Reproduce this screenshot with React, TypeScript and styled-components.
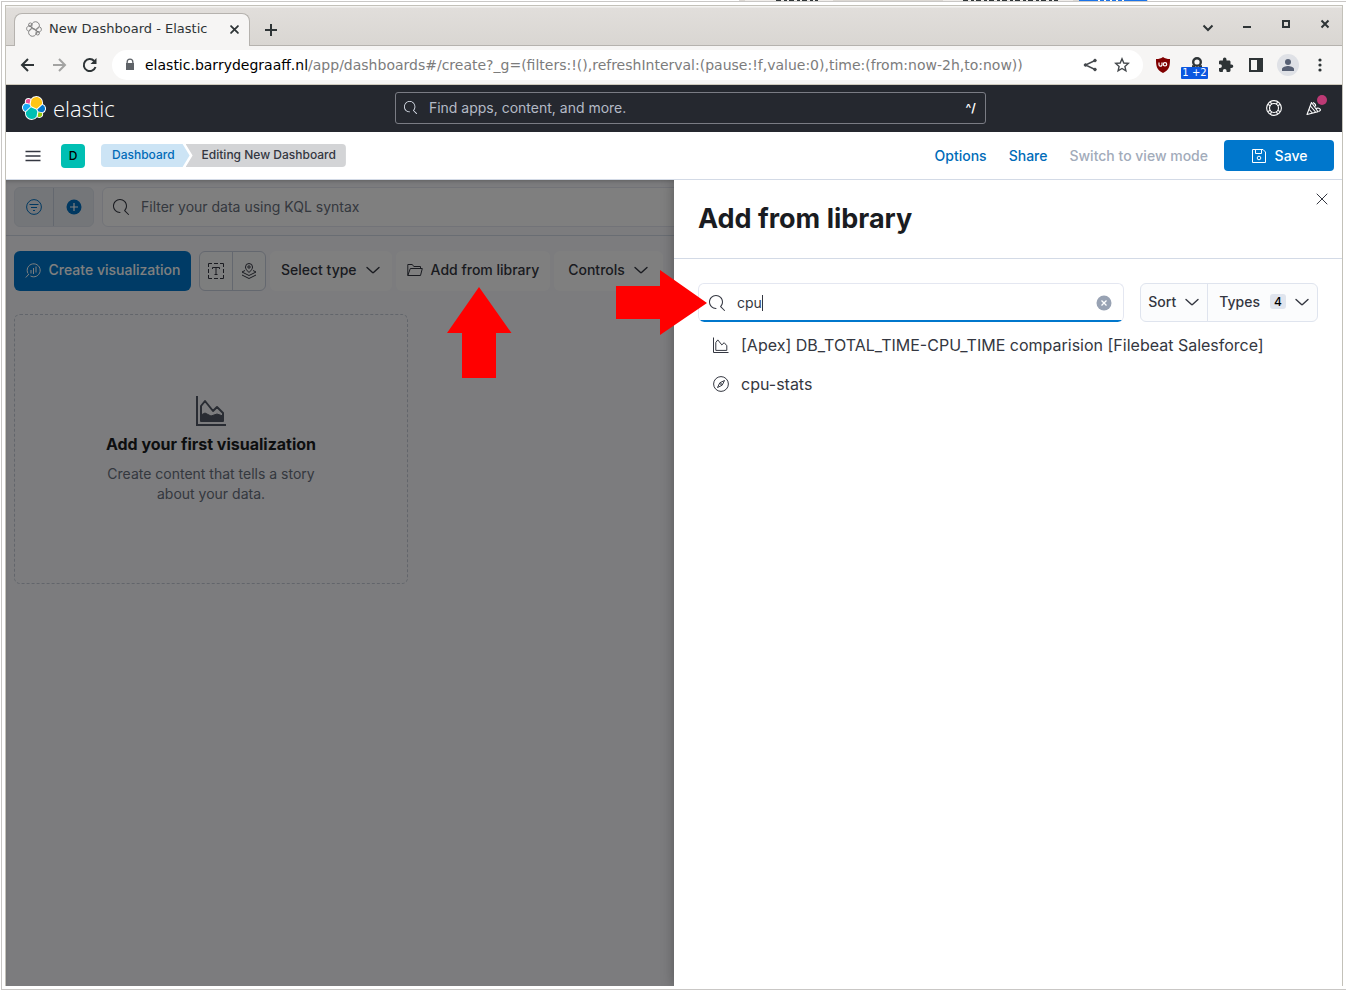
import React from "react";
import styled, { createGlobalStyle, css } from "styled-components";

const Global = createGlobalStyle`
  *, *::before, *::after { box-sizing: border-box; }
  html, body, #root { height: 100%; }
  body { margin: 0; background: #fff; overflow: hidden; font-family: Inter, "Liberation Sans", sans-serif; font-size: 14px; line-height: 20px; color: #343741; }
  button, input { font: inherit; color: inherit; }
  button { border: 0; padding: 0; background: none; cursor: pointer; }
  a { text-decoration: none; color: inherit; }
  h1, h2, p, ul { margin: 0; padding: 0; }
  svg { display: block; flex: none; }
`;

/* ---------- desktop behind the browser ---------- */

const Desktop = styled.div`
  display: flex;
  flex-direction: column;
  height: 100vh;
`;

const DialogEdge = styled.div`
  display: flex;
  justify-content: flex-end;
  flex: none;
  height: 1px;
  padding-right: 176px;
`;

const Frame = styled.div`
  flex: 1;
  min-height: 0;
  margin-left: 1px;
  padding: 3px;
  border: 1px solid #c9c7c5;
  border-right: 0;
  display: flex;
`;

const BrowserWindow = styled.div`
  flex: 1;
  min-width: 0;
  display: flex;
  flex-direction: column;
  border: 1px solid #c3c1b9;
  border-bottom: 0;
  background: #fff;
`;

/* ---------- browser chrome ---------- */

const TabBar = styled.div`
  display: flex;
  align-items: flex-end;
  height: 40px;
  flex: none;
  padding-left: 8px;
  background: linear-gradient(#f4f3f1 0, #f4f3f1 1px, #e1dedb 2px, #d9d6d2 100%);
  box-shadow: inset 0 -1px #b5b2ae;
  font-family: "DejaVu Sans", sans-serif;
  font-size: 13px;
  color: #2e3436;
`;

const Tab = styled.div`
  display: flex;
  align-items: center;
  width: 236px;
  height: 33px;
  padding: 0 7px 2px 11px;
  border: 1px solid #b5b2ae;
  border-bottom: 0;
  border-radius: 8px 8px 0 0;
  background: #f6f5f4;
`;

const TabTitle = styled.span`
  flex: 1;
  margin-left: 7px;
  white-space: nowrap;
`;

const PlainButton = styled.button<{ $size?: number }>`
  display: flex;
  align-items: center;
  justify-content: center;
  flex: none;
  width: ${(p) => p.$size ?? 16}px;
  height: ${(p) => p.$size ?? 16}px;
`;

const NewTab = styled(PlainButton)`
  margin: 0 0 8px 13px;
`;

const WindowControls = styled.div`
  display: flex;
  align-items: center;
  align-self: flex-start;
  gap: 23px;
  height: 36px;
  margin-left: auto;
  padding-right: 9px;
`;

const AddressBar = styled.div`
  display: flex;
  align-items: center;
  gap: 12px;
  height: 39px;
  flex: none;
  padding: 0 13px 0 12px;
  background: #f6f5f4;
  border-bottom: 1px solid #cfcabd;
  color: #2e3436;
`;

const NavButtons = styled.div`
  display: flex;
  gap: 11px;
`;

const UrlField = styled.div`
  display: flex;
  align-items: center;
  flex: 1;
  min-width: 0;
  height: 30px;
  padding: 0 12px;
  border-radius: 15px;
  background: #fff;
  font: 14px/20px "DejaVu Sans", sans-serif;
  color: #7c7c7c;
  white-space: nowrap;
`;

const Url = styled.span`
  flex: 1;
  margin-left: 9px;
  overflow: hidden;
  b { font-weight: 400; color: #000; }
`;

const UrlTools = styled.div`
  display: flex;
  gap: 14px;
`;

const Extensions = styled.div`
  display: flex;
  align-items: center;
  gap: 12px;
`;

const BadgeHost = styled.span<{ $width?: number }>`
  position: relative;
  display: flex;
  justify-content: flex-end;
  width: ${(p) => p.$width ?? 16}px;
`;

const ExtBadge = styled.span`
  position: absolute;
  top: 10px;
  left: -2px;
  width: 27px;
  height: 12px;
  border-radius: 1px;
  background: #0b57e0;
  color: #fff;
  font: 10px/12px "DejaVu Sans", sans-serif;
  text-align: center;
  white-space: nowrap;
`;

const Avatar = styled.span`
  display: flex;
  align-items: center;
  justify-content: center;
  width: 22px;
  height: 22px;
  border-radius: 50%;
  background: #dfe1e6;
`;

/* ---------- elastic header ---------- */

const TopHeader = styled.header`
  display: flex;
  justify-content: space-between;
  align-items: center;
  height: 47px;
  flex: none;
  padding: 0 20px 2px 16px;
  background: #25282f;
  color: #fff;
`;

const Brand = styled.a`
  display: flex;
  align-items: center;
  gap: 7px;
  font: 300 22px/28px "Open Sans", "Noto Sans", sans-serif;
`;

const GlobalSearch = styled.label`
  display: flex;
  align-items: center;
  gap: 12px;
  width: 44%;
  max-width: 591px;
  min-width: 0;
  flex: 0 1 591px;
  height: 32px;
  padding: 0 9px 0 8px;
  border: 1px solid #7a7c84;
  border-radius: 3px;
  font-size: 14px;
  color: #dfe5ef;
  input {
    flex: 1;
    min-width: 0;
    border: 0;
    outline: 0;
    padding: 0;
    background: none;
    &::placeholder { color: #b4bac6; opacity: 1; }
  }
`;

const KeyHint = styled.span`
  font-size: 12px;
  font-weight: 600;
  color: #fff;
`;

const HeaderIcons = styled.div`
  display: flex;
  gap: 24px;
  color: #fff;
`;

const NewsDot = styled.span`
  position: absolute;
  top: -5px;
  right: -5px;
  width: 10px;
  height: 10px;
  border-radius: 50%;
  background: #bd3a75;
`;

const SubHeader = styled.div`
  display: flex;
  align-items: center;
  height: 48px;
  flex: none;
  padding: 0 8px 0 19px;
  border-bottom: 1px solid #d3dae6;
  background: #fff;
`;

const SpaceAvatar = styled.button`
  width: 24px;
  height: 24px;
  margin: 0 16px 0 20px;
  border-radius: 4px;
  background: #00bfb3;
  color: #000;
  font-size: 12px;
  font-weight: 500;
`;

const Crumbs = styled.nav`
  display: flex;
  font-size: 12px;
  font-weight: 500;
  line-height: 22px;
`;

const Crumb = styled.a<{ $last?: boolean }>`
  height: 23px;
  ${(p) =>
    p.$last
      ? css`
          padding: 0 10px 0 16px;
          margin-left: -4px;
          background: #d3d4d6;
          color: #343741;
          border-radius: 0 4px 4px 0;
          clip-path: polygon(0 0, 100% 0, 100% 100%, 0 100%, 7px 50%);
        `
      : css`
          padding: 0 15px 0 11px;
          background: #cce4f5;
          color: #006bb8;
          border-radius: 4px 0 0 4px;
          clip-path: polygon(0 0, calc(100% - 7px) 0, 100% 50%, calc(100% - 7px) 100%, 0 100%);
        `}
`;

const Actions = styled.div`
  display: flex;
  align-items: center;
  margin-left: auto;
  gap: 22px;
  font-weight: 500;
`;

const TextAction = styled.button<{ $muted?: boolean }>`
  color: ${(p) => (p.$muted ? "#a2abba" : "#006bb8")};
`;

const SaveButton = styled.button`
  display: flex;
  align-items: center;
  justify-content: center;
  gap: 8px;
  width: 110px;
  height: 31px;
  margin-left: -6px;
  border-radius: 4px;
  background: #0077cc;
  color: #fff;
`;

/* ---------- dashboard body ---------- */

const Workspace = styled.main`
  position: relative;
  flex: 1;
  min-height: 0;
  overflow: hidden;
  background: #f8f9fc;
`;

const FilterBar = styled.div`
  display: flex;
  gap: 8px;
  height: 56px;
  padding: 7px 8px 8px;
  border-bottom: 1px solid #d3dae6;
`;

const ButtonGroup = styled.div<{ $tone: "tinted" | "plain" }>`
  display: flex;
  height: 40px;
  flex: none;
  border: 1px solid ${(p) => (p.$tone === "tinted" ? "#e0e5ee" : "#c9d0de")};
  border-radius: 6px;
  overflow: hidden;
  background: ${(p) => (p.$tone === "tinted" ? "#e9edf3" : "#fbfcfd")};
  button {
    display: flex;
    align-items: center;
    justify-content: center;
    width: ${(p) => (p.$tone === "tinted" ? 38 : 32)}px;
  }
  button + button {
    border-left: 1px solid #c9d0de;
    width: ${(p) => (p.$tone === "tinted" ? 40 : 33)}px;
  }
`;

const SearchBox = styled.label<{ $focused?: boolean }>`
  display: flex;
  align-items: center;
  gap: 12px;
  flex: 1;
  min-width: 0;
  height: ${(p) => (p.$focused ? 39 : 40)}px;
  padding: 0 11px 0 10px;
  border: 1px solid #e4e7f1;
  border-radius: 6px;
  background: ${(p) =>
    p.$focused ? "linear-gradient(#0077cc, #0077cc) 0 100% / 100% 2px no-repeat #fff" : "#fff"};
  ${(p) => p.$focused && "border-bottom: 0;"}
  overflow: hidden;
  input {
    flex: 1;
    min-width: 0;
    border: 0;
    outline: 0;
    padding: 0;
    background: none;
    &::placeholder { color: #69707d; opacity: 1; }
  }
`;

const TypedText = styled.span`
  display: flex;
  align-items: center;
  flex: 1;
  min-width: 0;
  input {
    flex: 0 1 auto;
    field-sizing: content;
    caret-color: transparent;
  }
`;

const Caret = styled.span`
  width: 1px;
  height: 16px;
  background: #343741;
`;

const Toolbar = styled.div`
  display: flex;
  gap: 4px;
  padding: 15px 8px 0;
  font-weight: 500;
`;

const CreateButton = styled.button`
  display: flex;
  align-items: center;
  justify-content: center;
  gap: 8px;
  width: 177px;
  height: 40px;
  margin-right: 4px;
  padding-bottom: 2px;
  border-radius: 6px;
  background: #0077cc;
  color: #fff;
`;

const ToolButton = styled.button<{ $wide?: boolean }>`
  display: flex;
  align-items: center;
  gap: 8px;
  height: 40px;
  padding: 0 ${(p) => (p.$wide ? 14 : 11)}px 2px;
  border-radius: 6px;
  background: #fff;
  color: #343741;
`;

const EmptyPanel = styled.section`
  display: flex;
  flex-direction: column;
  align-items: center;
  width: 394px;
  height: 270px;
  margin: 23px 8px;
  padding-top: 81px;
  border: 1px dashed #c5cbd6;
  border-radius: 6px;
  text-align: center;
  color: #69707d;
  h2 {
    margin: 8px 0 10px;
    font-size: 16px;
    line-height: 20px;
    font-weight: 700;
    color: #1a1c21;
  }
  p { width: 230px; }
  svg { color: #535966; }
`;

const Scrim = styled.div`
  position: absolute;
  inset: 0;
  background: rgba(0, 0, 0, 0.5);
  box-shadow: inset 0 3px 4px -2px rgba(0, 0, 0, 0.25);
`;

/* ---------- flyout ---------- */

const Flyout = styled.aside`
  position: absolute;
  top: 0;
  right: 0;
  bottom: 0;
  width: 50%;
  background: #fff;
  box-shadow: 0 0 12px rgba(0, 0, 0, 0.3);
`;

const FlyoutHeader = styled.div`
  display: flex;
  justify-content: space-between;
  height: 79px;
  padding: 11px 12px 0 24px;
  border-bottom: 1px solid #d3dae6;
  h2 {
    padding-top: 12px;
    font-size: 27px;
    line-height: 32px;
    font-weight: 700;
    color: #1a1c21;
  }
`;

const FlyoutBody = styled.div`
  padding: 24px;
`;

const SearchRow = styled.div`
  display: flex;
  gap: 16px;
`;

const FilterGroup = styled.div`
  display: flex;
  height: 39px;
  border: 1px solid #dfe4ee;
  border-radius: 6px;
  background: #fbfcfd;
  font-weight: 500;
  button {
    display: flex;
    align-items: center;
    gap: 8px;
    padding: 0 7px 2px;
  }
  button + button {
    padding-left: 11px;
    border-left: 1px solid #dfe4ee;
  }
`;

const Count = styled.span`
  min-width: 16px;
  height: 15px;
  margin-left: 2px;
  border-radius: 3px;
  background: #e0e5ee;
  color: #000;
  font-size: 12px;
  line-height: 15px;
`;

const Results = styled.ul`
  list-style: none;
  padding: 3px 15px;
  font-size: 16px;
  line-height: 24px;
  a {
    display: flex;
    align-items: center;
    gap: 12px;
    height: 39px;
  }
`;

const Arrow = styled.svg<{ $x: string; $y: number }>`
  position: absolute;
  left: ${(p) => p.$x};
  top: ${(p) => p.$y}px;
  fill: #f00;
`;

/* ---------- icons ---------- */

type IconProps = { size?: number; children?: React.ReactNode; box?: number; w?: number };

const Line = ({ size = 16, box = 16, w = 1, children }: IconProps) => (
  <svg width={size} height={size} viewBox={`0 0 ${box} ${box}`} fill="none" stroke="currentColor" strokeWidth={w}>
    {children}
  </svg>
);

const SearchIcon = ({ size = 16 }: IconProps) => (
  <svg width={size} height={size} viewBox="0 0 16 16" fill="currentColor">
    <path d="M11.271 11.978l3.872 3.873a.502.502 0 00.708 0 .502.502 0 000-.708l-3.565-3.564c2.38-2.747 2.267-6.923-.342-9.532-2.73-2.73-7.17-2.73-9.898 0-2.728 2.729-2.728 7.17 0 9.9a6.955 6.955 0 004.949 2.05.5.5 0 000-1 5.96 5.96 0 01-4.242-1.757 6.01 6.01 0 010-8.486 6.004 6.004 0 018.484 0 6.01 6.01 0 010 8.486.5.5 0 00.034.738z" />
  </svg>
);

const Chevron = () => (
  <Line w={1.4}>
    <path d="M2 5.5l5.5 5a.7.7 0 001 0l5.5-5" strokeLinecap="round" />
  </Line>
);

const Cross = ({ size = 16, w = 1 }: IconProps) => (
  <Line size={size} w={w}>
    <path d="M3 3l10 10M13 3L3 13" strokeLinecap="round" />
  </Line>
);

const logoParts: [string, string][] = [
  ["#FEC514", "M12.58 13.787l7.002 3.211 7.066-6.213a7.849 7.849 0 00.152-1.557c0-4.287-3.464-7.764-7.736-7.764a7.713 7.713 0 00-6.375 3.36l-1.176 6.12 1.067 2.843z"],
  ["#00BFB3", "M5.333 21.215A8.3 8.3 0 005.176 22.8c0 4.3 3.475 7.786 7.76 7.786a7.747 7.747 0 006.394-3.371l1.167-6.104-1.557-2.986-7.029-3.214-6.578 6.304z"],
  ["#F04E98", "M5.288 9.067l4.8 1.136L11.14 4.73a3.786 3.786 0 00-2.305-.8 3.802 3.802 0 00-3.787 3.815c0 .455.082.905.24 1.32z"],
  ["#1BA9F5", "M4.872 10.214c-2.145.711-3.647 2.777-3.647 5.054 0 2.217 1.368 4.197 3.421 4.983l6.735-6.109-1.236-2.652-5.273-1.276z"],
  ["#93C90E", "M20.873 27.179a3.779 3.779 0 002.293.785 3.802 3.802 0 003.788-3.815 3.77 3.77 0 00-.24-1.323l-4.796-1.125-1.045 5.478z"],
  ["#0077CC", "M21.849 20.562l5.279 1.238c2.146-.711 3.648-2.777 3.648-5.055a5.34 5.34 0 00-3.425-4.98l-6.905 6.07 1.403 2.727z"],
];

const ElasticLogo = ({ size = 24, outline = false }: { size?: number; outline?: boolean }) => (
  <svg width={size} height={size} viewBox="0 0 32 32">
    {!outline && logoParts.map(([, d]) => <path key={d} d={d} fill="#fff" stroke="#fff" strokeWidth="2.6" />)}
    {logoParts.map(([c, d]) => (
      <path key={d} d={d} fill={outline ? "none" : c} stroke={outline ? "#6b6b6b" : "none"} strokeWidth="1.6" />
    ))}
  </svg>
);

const AreaIcon = ({ size = 16 }: IconProps) => (
  <Line size={size}>
    <path d="M.5.5v15h15" />
    <path d="M2.8 13.4V5.500l2-2.600 4 5 2.400-2.200 2.600 3v4.700z" strokeLinejoin="round" />
  </Line>
);

const AreaFilledIcon = () => (
  <Line size={30} box={30} w={2}>
    <path d="M1 0v29h29" />
    <path d="M5 25V10l4-5 8 10 4-4 6 6v8z" strokeLinejoin="round" />
    <path d="M5 25v-6l4-2 6 3 6-2 6 2v5z" fill="currentColor" strokeWidth="1" />
  </Line>
);

/* ---------- page ---------- */

export default function App() {
  return (
    <Desktop>
      <Global />
      <DialogEdge aria-hidden="true">
        <svg width="450" height="1" viewBox="0 0 450 1">
          <path d="M19 0h409v1H19z" fill="#dcd8d3" />
          <path d="M25 0h88v1H25zM223 0h130v1H223z" fill="#f0edea" />
          <path d="M359 0h68v1h-68z" fill="#1a73e8" />
          <path d="M56 .5h42M224 .5h0M223 .5m20 0h95" stroke="#2e3436" strokeDasharray="5 3 3 2" />
          <path d="M378 .5h28" stroke="#fff" strokeDasharray="2 4" />
        </svg>
      </DialogEdge>
      <Frame>
        <BrowserWindow>
          <TabBar>
            <Tab>
              <ElasticLogo size={16} outline />
              <TabTitle>New Dashboard - Elastic</TabTitle>
              <PlainButton aria-label="Close tab"><Cross size={11} w={2.6} /></PlainButton>
            </Tab>
            <NewTab aria-label="New tab">
              <Line w={2}><path d="M8 2v12M2 8h12" /></Line>
            </NewTab>
            <WindowControls>
              <PlainButton aria-label="Search tabs"><Line w={2}><path d="M3.500 9.500l4.500 4.500 4.500-4.500" /></Line></PlainButton>
              <PlainButton aria-label="Minimize"><Line w={2}><path d="M4 11h8" /></Line></PlainButton>
              <PlainButton aria-label="Maximize"><Line w={2}><path d="M5 5h6v6H5z" /></Line></PlainButton>
              <PlainButton aria-label="Close window"><Line w={2}><path d="M4.500 4.500l7 7M11.500 4.500l-7 7" /></Line></PlainButton>
            </WindowControls>
          </TabBar>
          <AddressBar>
            <NavButtons>
              <PlainButton aria-label="Back" $size={20}><Line w={2}><path d="M14 8H2.500M8 2L2 8l6 6" /></Line></PlainButton>
              <PlainButton aria-label="Forward" $size={20}><Line w={2}><path stroke="#a3a3a2" d="M2 8h11.500M8 2l6 6-6 6" /></Line></PlainButton>
              <PlainButton aria-label="Reload" $size={20}>
                <Line w={2}><path d="M13.500 10A6 6 0 1112.200 4" /><path d="M14.500 1v6h-6z" fill="currentColor" stroke="none" /></Line>
              </PlainButton>
            </NavButtons>
            <UrlField>
              <svg width="12" height="14" viewBox="0 0 12 14" fill="#5f6368">
                <path d="M2.500 5V4a3.500 3.500 0 017 0v1h.5v7H2V5zm1.300 0h4.400V4a2.200 2.200 0 00-4.400 0z" fillRule="evenodd" />
              </svg>
              <Url>
                <b>elastic.barrydegraaff.nl</b>/app/dashboards#/create?_g=(filters:!(),refreshInterval:(pause:!f,value:0),time:(from:now-2h,to:now))
              </Url>
              <UrlTools>
                <PlainButton aria-label="Share page" $size={18}>
                  <svg width="14" height="14" viewBox="0 0 14 14" fill="#44484c" stroke="#44484c">
                    <path d="M12 2.500L2.500 7l9.500 4.500" fill="none" strokeWidth="1.400" />
                    <circle cx="12" cy="2.500" r="1.300" /><circle cx="2.500" cy="7" r="1.300" /><circle cx="12" cy="11.500" r="1.300" />
                  </svg>
                </PlainButton>
                <PlainButton aria-label="Bookmark" $size={18}>
                  <svg width="16" height="16" viewBox="0 0 16 16" fill="none" stroke="#44484c" strokeWidth="1.400">
                    <path d="M8 1.800l1.800 4.200 4.500.4-3.400 3 1 4.400L8 11.500l-3.900 2.300 1-4.400-3.400-3 4.500-.4z" />
                  </svg>
                </PlainButton>
              </UrlTools>
            </UrlField>
            <Extensions>
              <svg width="16" height="16" viewBox="0 0 16 16">
                <path d="M8 0c2 1.400 4 2 7 2 0 7-.5 11-7 14C1.500 13 1 9 1 2c3 0 5-.6 7-2z" fill="#800000" />
                <path d="M4 5.500v2.200a1.500 1.500 0 003 0V5.500M7 5.500v3" fill="none" stroke="#fff" strokeWidth="1.200" />
                <circle cx="10" cy="7.300" r="1.700" fill="none" stroke="#fff" strokeWidth="1.200" />
              </svg>
              <BadgeHost $width={22}>
                <Line w={2.4}><circle cx="8" cy="5" r="3.800" /><path d="M3 9.500h3M10 9.500h3" /></Line>
                <ExtBadge>1 +2</ExtBadge>
              </BadgeHost>
              <PlainButton aria-label="Extensions" $size={18}>
                <svg width="16" height="16" viewBox="0 0 16 16" fill="#2e3436">
                  <path d="M13.500 7.500h-1V4.700c0-.7-.6-1.300-1.300-1.300H8.500v-1a1.800 1.800 0 00-3.600 0v1H2.200c-.7 0-1.200.6-1.200 1.300v2.500h1a1.900 1.900 0 010 3.800H1v2.600c0 .8.500 1.400 1.200 1.400h2.600v-1a1.900 1.900 0 013.800 0v1h2.600c.7 0 1.300-.6 1.300-1.400v-2.500h1a1.800 1.800 0 000-3.600z" />
                </svg>
              </PlainButton>
              <PlainButton aria-label="Side panel" $size={18}>
                <svg width="14" height="14" viewBox="0 0 14 14" fill="#2e3436">
                  <path d="M0 0h14v14H0zM2 2v10h6V2z" fillRule="evenodd" />
                </svg>
              </PlainButton>
              <Avatar>
                <svg width="14" height="14" viewBox="0 0 14 14" fill="#565f73"><circle cx="7" cy="4" r="3" /><path d="M1 13v-2c0-2 4-3 6-3s6 1 6 3v2z" /></svg>
              </Avatar>
              <PlainButton aria-label="Browser menu" $size={18}>
                <svg width="4" height="14" viewBox="0 0 4 14" fill="#2e3436"><circle cx="2" cy="2" r="1.600" /><circle cx="2" cy="7" r="1.600" /><circle cx="2" cy="12" r="1.600" /></svg>
              </PlainButton>
            </Extensions>
          </AddressBar>

          <TopHeader>
            <Brand href="#home"><ElasticLogo />elastic</Brand>
            <GlobalSearch>
              <SearchIcon size={13} />
              <input aria-label="Global search" placeholder="Find apps, content, and more." />
              <KeyHint>^/</KeyHint>
            </GlobalSearch>
            <HeaderIcons>
              <PlainButton aria-label="Help">
                <Line w={1.1}>
                  <circle cx="8" cy="8" r="7.400" /><circle cx="8" cy="8" r="4.500" />
                  <path d="M2 4.500l2.500 1.200M4.500 2l1.200 2.500M14 4.500l-2.500 1.200M11.500 2l-1.200 2.500M2 11.500l2.500-1.200M4.500 14l1.200-2.500M14 11.500l-2.500-1.200M11.500 14l-1.200-2.500" />
                </Line>
              </PlainButton>
              <BadgeHost>
                <PlainButton aria-label="What's new">
                  <Line w={1.1}>
                    <path d="M5.500 2.500L1 14.500l11-2.800z" strokeLinejoin="round" />
                    <path d="M4.500 6l5 6M3.200 9.500l3.200 3.500M7 2.500c2 1 3 2.500 2.500 4M10 8.500c2-1 4 0 4.500 1.500-.5 1-1.500 1.500-2 1" />
                  </Line>
                </PlainButton>
                <NewsDot />
              </BadgeHost>
            </HeaderIcons>
          </TopHeader>

          <SubHeader>
            <PlainButton aria-label="Open menu">
              <Line w={1.6}><path d="M.5 3.500h15M.5 8h15M.5 12.500h15" /></Line>
            </PlainButton>
            <SpaceAvatar aria-label="Default space">D</SpaceAvatar>
            <Crumbs aria-label="Breadcrumb">
              <Crumb href="#dashboards">Dashboard</Crumb>
              <Crumb href="#editing" $last>Editing New Dashboard</Crumb>
            </Crumbs>
            <Actions>
              <TextAction>Options</TextAction>
              <TextAction>Share</TextAction>
              <TextAction $muted>Switch to view mode</TextAction>
              <SaveButton>
                <Line><path d="M1.500 1.500h10.500l2.500 2.500v10.500h-13z" /><path d="M4.500 1.500v4h6v-4" /><circle cx="8" cy="10" r="1.800" /></Line>
                Save
              </SaveButton>
            </Actions>
          </SubHeader>

          <Workspace>
            <FilterBar>
              <ButtonGroup $tone="tinted">
                <button aria-label="Filter menu">
                  <Line><g stroke="#0071c2"><circle cx="8" cy="8" r="7.400" /><path d="M3.500 5.500h9M5 8.500h6M7 11.500h2" /></g></Line>
                </button>
                <button aria-label="Add filter">
                  <svg width="16" height="16" viewBox="0 0 16 16"><circle cx="8" cy="8" r="7.500" fill="#0071c2" /><path d="M8 4v8M4 8h8" stroke="#fff" strokeWidth="1.200" /></svg>
                </button>
              </ButtonGroup>
              <SearchBox>
                <SearchIcon />
                <input aria-label="Query" placeholder="Filter your data using KQL syntax" />
              </SearchBox>
            </FilterBar>
            <Toolbar>
              <CreateButton>
                <Line>
                  <path d="M3 11.500a6.500 6.500 0 112.500 2.500M.8 15.500L4 12" /><path d="M6 11.500V8M8.500 12V6M11 10.500V4.500" />
                </Line>
                Create visualization
              </CreateButton>
              <ButtonGroup $tone="plain">
                <button aria-label="Add text">
                  <Line><path d="M.5 4V.5H4M6 .5h4M12 .5h3.500V4M15.500 6v4M15.500 12v3.500H12M10 15.500H6M4 15.500H.5V12M.5 10V6" /><path d="M4.500 6V4.500h7V6M8 4.500v7M6.500 11.500h3" /></Line>
                </button>
                <button aria-label="Add map">
                  <Line><path d="M8 9.500C5.500 7 4.500 5.800 4.500 4a3.500 3.500 0 017 0c0 1.800-1 3-3.500 5.500z" /><circle cx="8" cy="4" r="1.200" /><path d="M4 7.500L1 9l7 3.500L15 9l-3-1.500M1 12l7 3.500 7-3.500" /></Line>
                </button>
              </ButtonGroup>
              <ToolButton>Select type<Chevron /></ToolButton>
              <ToolButton>
                <Line><path d="M.8 13.500V2.500h4.500l1.500 2h6.700v2M.8 13.500l2.500-7h12l-1.800 7z" strokeLinejoin="round" /></Line>
                Add from library
              </ToolButton>
              <ToolButton $wide>Controls<Chevron /></ToolButton>
            </Toolbar>
            <EmptyPanel>
              <AreaFilledIcon />
              <h2>Add your first visualization</h2>
              <p>Create content that tells a story about your data.</p>
            </EmptyPanel>
            <Scrim />
            <Flyout aria-label="Add from library">
              <FlyoutHeader>
                <h2>Add from library</h2>
                <PlainButton aria-label="Close"><Cross /></PlainButton>
              </FlyoutHeader>
              <FlyoutBody>
                <SearchRow>
                  <SearchBox $focused>
                    <SearchIcon />
                    <TypedText>
                      <input aria-label="Search library" defaultValue="cpu" />
                      <Caret />
                    </TypedText>
                    <PlainButton aria-label="Clear">
                      <svg width="16" height="16" viewBox="0 0 16 16"><circle cx="8" cy="8" r="7.500" fill="#98a2b3" /><path d="M5.500 5.500l5 5M10.500 5.500l-5 5" stroke="#fff" strokeWidth="1.300" /></svg>
                    </PlainButton>
                  </SearchBox>
                  <FilterGroup>
                    <button>Sort<Chevron /></button>
                    <button>Types<Count>4</Count><Chevron /></button>
                  </FilterGroup>
                </SearchRow>
                <Results>
                  <li><a href="#apex"><AreaIcon />[Apex] DB_TOTAL_TIME-CPU_TIME comparision [Filebeat Salesforce]</a></li>
                  <li><a href="#cpu-stats">
                    <Line><circle cx="8" cy="8" r="7.400" /><path d="M11.500 4.500L9.200 9.200 4.500 11.500l2.300-4.700z" strokeLinejoin="round" /><circle cx="8" cy="8" r=".5" /></Line>
                    cpu-stats
                  </a></li>
                </Results>
              </FlyoutBody>
            </Flyout>
            <Arrow $x="441px" $y={107} width="65" height="91" viewBox="0 0 65 91" aria-hidden="true">
              <path d="M32 0l32.500 46H49v45H15V46H0z" />
            </Arrow>
            <Arrow $x="calc(50% - 58px)" $y={90} width="92" height="65" viewBox="0 0 92 65" aria-hidden="true">
              <path d="M0 16h44V0l47 33-47 32V49H0z" />
            </Arrow>
          </Workspace>
        </BrowserWindow>
      </Frame>
    </Desktop>
  );
}
